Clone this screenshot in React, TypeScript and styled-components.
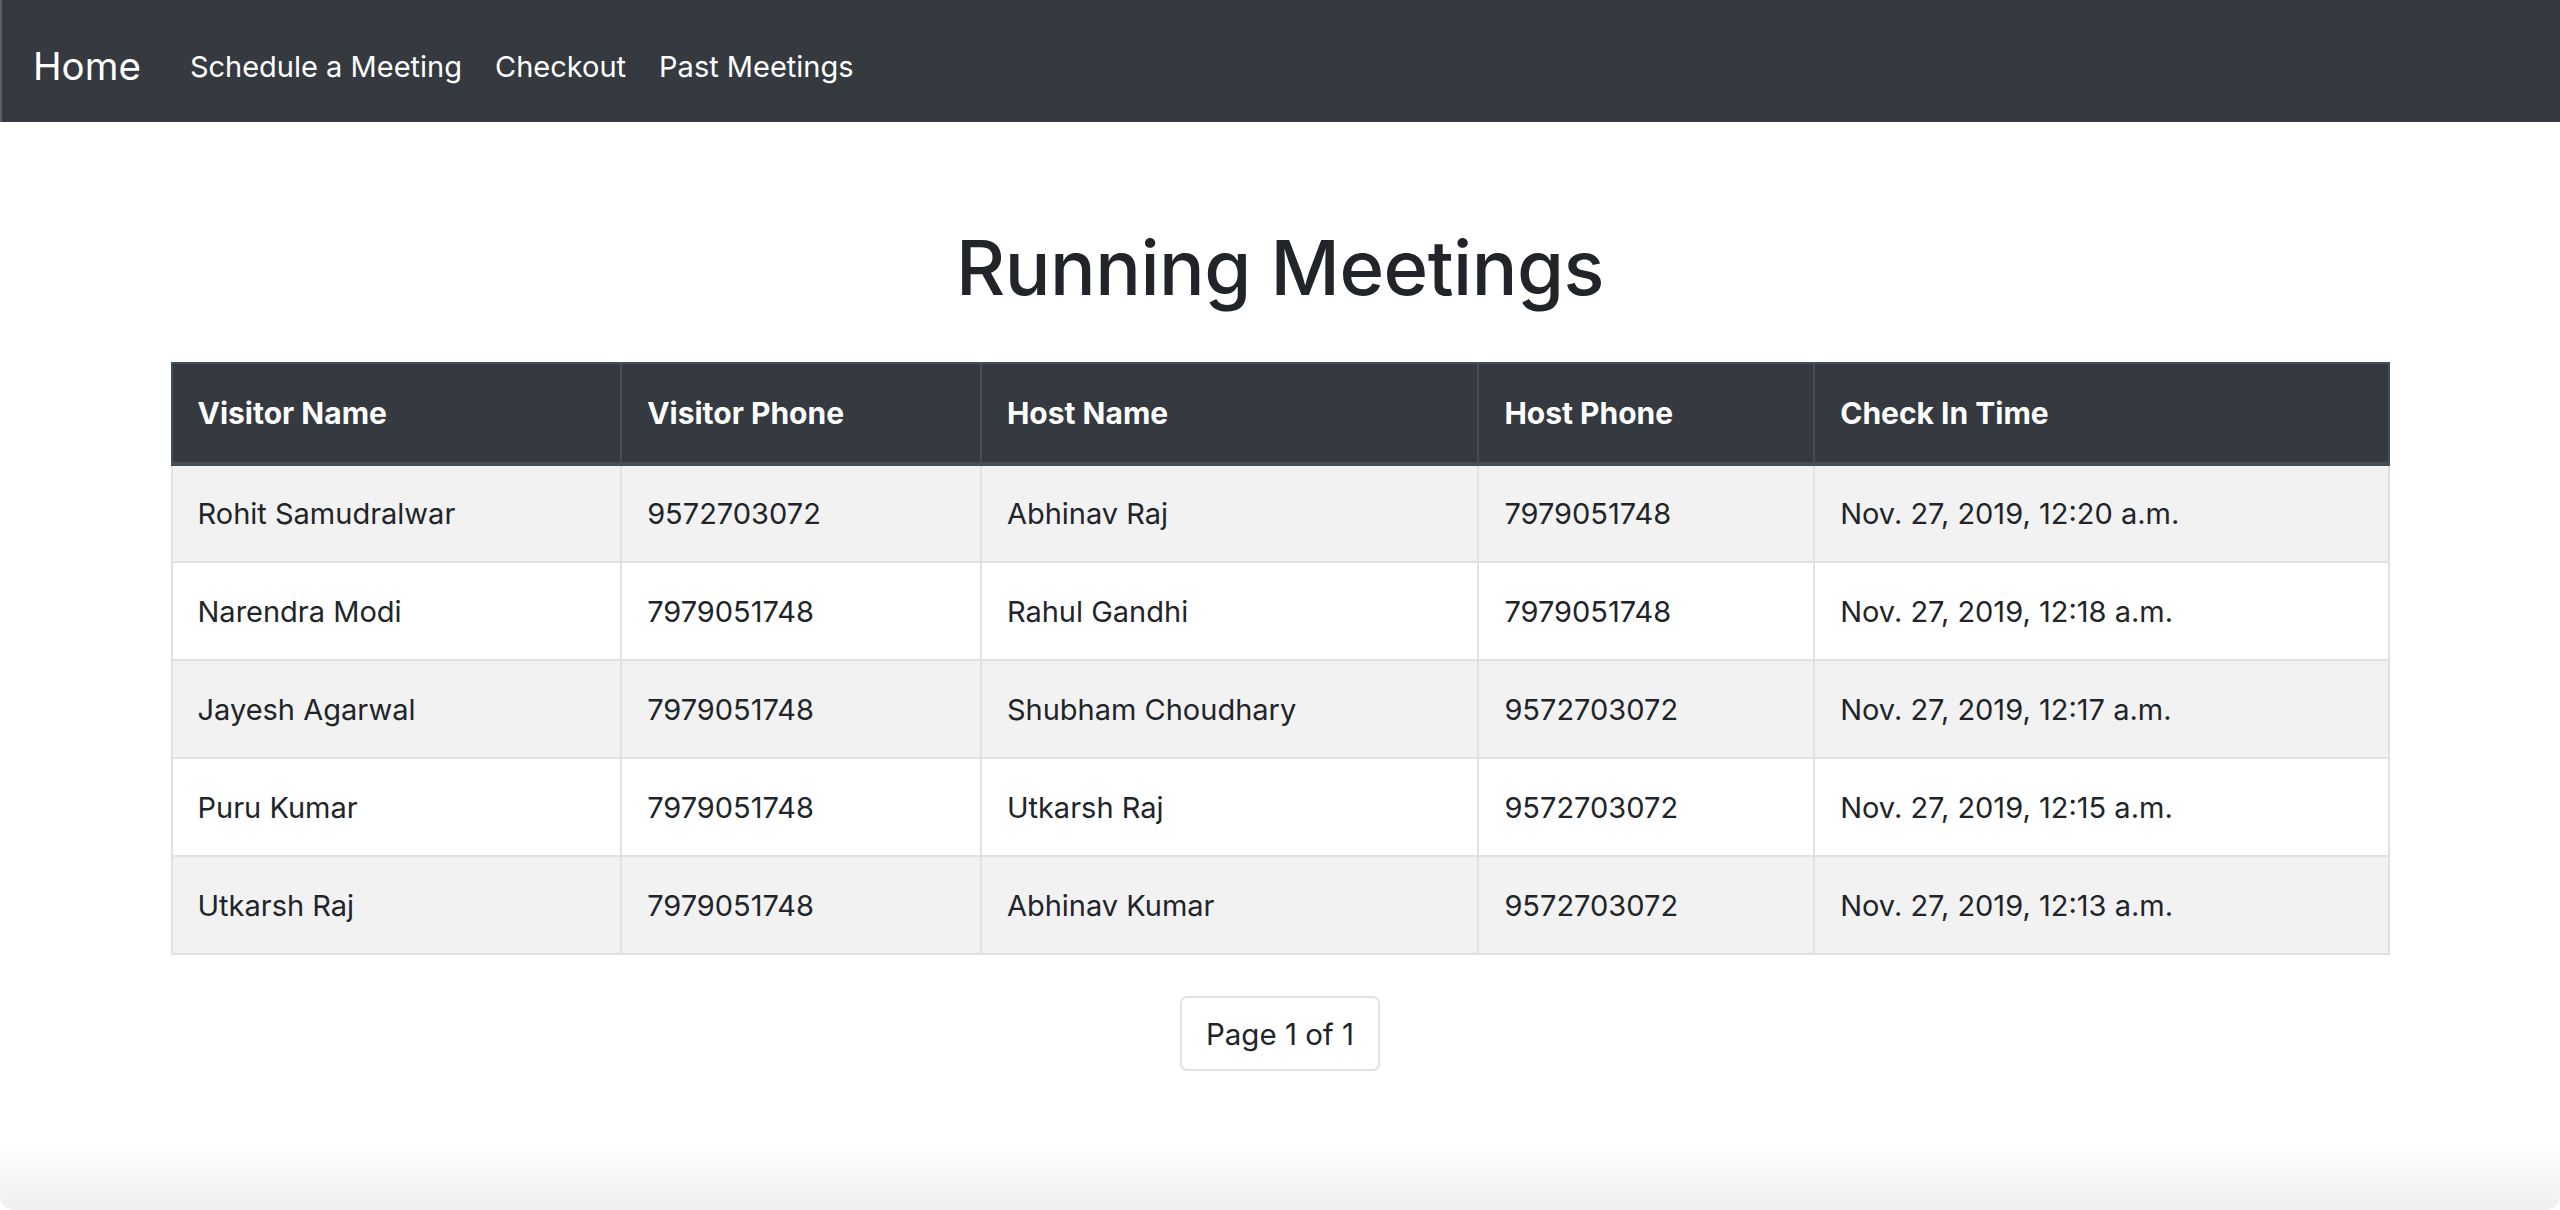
import React from "react";
import styled, { createGlobalStyle } from "styled-components";

const Global = createGlobalStyle`
  html, body { margin: 0; padding: 0; background: #fff; }
  body { font-family: Inter, "Noto Sans", sans-serif; color: #212529; }
  * { box-sizing: border-box; }
`;

const Page = styled.div`
  min-height: 1210px;
  display: flex;
  flex-direction: column;
  position: relative;
  overflow: hidden;
`;

const NavBar = styled.nav`
  height: 122px;
  background: #343a40;
  display: flex;
  align-items: center;
  padding: 10px 0 0 31px;
  border-left: 2px solid #5a5f66;
`;

const Brand = styled.a`
  color: #fff;
  font-size: 38.5px;
  margin-right: 49px;
  text-decoration: none;
`;

const NavLinks = styled.div`
  display: flex;
  gap: 33px;
`;

const NavLink = styled.a`
  color: #fff;
  font-size: 29px;
  text-decoration: none;
`;

const Main = styled.main`
  width: 2219px;
  margin: 0 auto;
  display: flex;
  flex-direction: column;
  align-items: center;
`;

const Title = styled.h1`
  margin: 107px 0 0;
  height: 133px;
  font-size: 76px;
  font-weight: 500;
  letter-spacing: -0.5px;
  color: #212529;
  line-height: 1;
`;

const Table = styled.table`
  width: 100%;
  border-collapse: collapse;
  border: 2px solid #dee2e6;
  font-size: 29px;
`;

const HeadCell = styled.th<{ $w: number }>`
  width: ${(p) => p.$w}px;
  height: 101px;
  background: #343a40;
  color: #fff;
  font-size: 30px;
  font-weight: 700;
  text-align: left;
  padding: 0 25px;
  border: 2px solid #454d55;
  border-bottom-width: 4px;
`;

const Row = styled.tr<{ $striped: boolean }>`
  background: ${(p) => (p.$striped ? "#f2f2f2" : "#fff")};
`;

const Cell = styled.td`
  height: 98px;
  padding: 0 25px;
  border: 2px solid #dee2e6;
  color: #212529;
`;

const Pager = styled.div`
  margin-top: 41px;
  width: 200px;
  height: 75px;
  border: 2px solid #dee2e6;
  border-radius: 7px;
  display: flex;
  align-items: center;
  justify-content: center;
  font-size: 29.5px;
  color: #212529;
`;

const BottomFade = styled.div`
  position: absolute;
  left: 0;
  right: 0;
  bottom: 0;
  height: 70px;
  background: linear-gradient(to bottom, rgba(240, 240, 240, 0), #f0f0f0);
  border-radius: 0 0 14px 14px;
`;

const columns = [
  { label: "Visitor Name", w: 450 },
  { label: "Visitor Phone", w: 360 },
  { label: "Host Name", w: 498 },
  { label: "Host Phone", w: 336 },
  { label: "Check In Time", w: 575 },
];

const rows = [
  ["Rohit Samudralwar", "9572703072", "Abhinav Raj", "7979051748", "Nov. 27, 2019, 12:20 a.m."],
  ["Narendra Modi", "7979051748", "Rahul Gandhi", "7979051748", "Nov. 27, 2019, 12:18 a.m."],
  ["Jayesh Agarwal", "7979051748", "Shubham Choudhary", "9572703072", "Nov. 27, 2019, 12:17 a.m."],
  ["Puru Kumar", "7979051748", "Utkarsh Raj", "9572703072", "Nov. 27, 2019, 12:15 a.m."],
  ["Utkarsh Raj", "7979051748", "Abhinav Kumar", "9572703072", "Nov. 27, 2019, 12:13 a.m."],
];

export default function App() {
  return (
    <Page>
      <Global />
      <NavBar>
        <Brand href="#">Home</Brand>
        <NavLinks>
          <NavLink href="#">Schedule a Meeting</NavLink>
          <NavLink href="#">Checkout</NavLink>
          <NavLink href="#">Past Meetings</NavLink>
        </NavLinks>
      </NavBar>
      <Main>
        <Title>Running Meetings</Title>
        <Table>
          <thead>
            <tr>
              {columns.map((c) => (
                <HeadCell key={c.label} $w={c.w}>
                  {c.label}
                </HeadCell>
              ))}
            </tr>
          </thead>
          <tbody>
            {rows.map((r, i) => (
              <Row key={i} $striped={i % 2 === 0}>
                {r.map((v, j) => (
                  <Cell key={j}>{v}</Cell>
                ))}
              </Row>
            ))}
          </tbody>
        </Table>
        <Pager>Page 1 of 1</Pager>
      </Main>
      <BottomFade />
    </Page>
  );
}
